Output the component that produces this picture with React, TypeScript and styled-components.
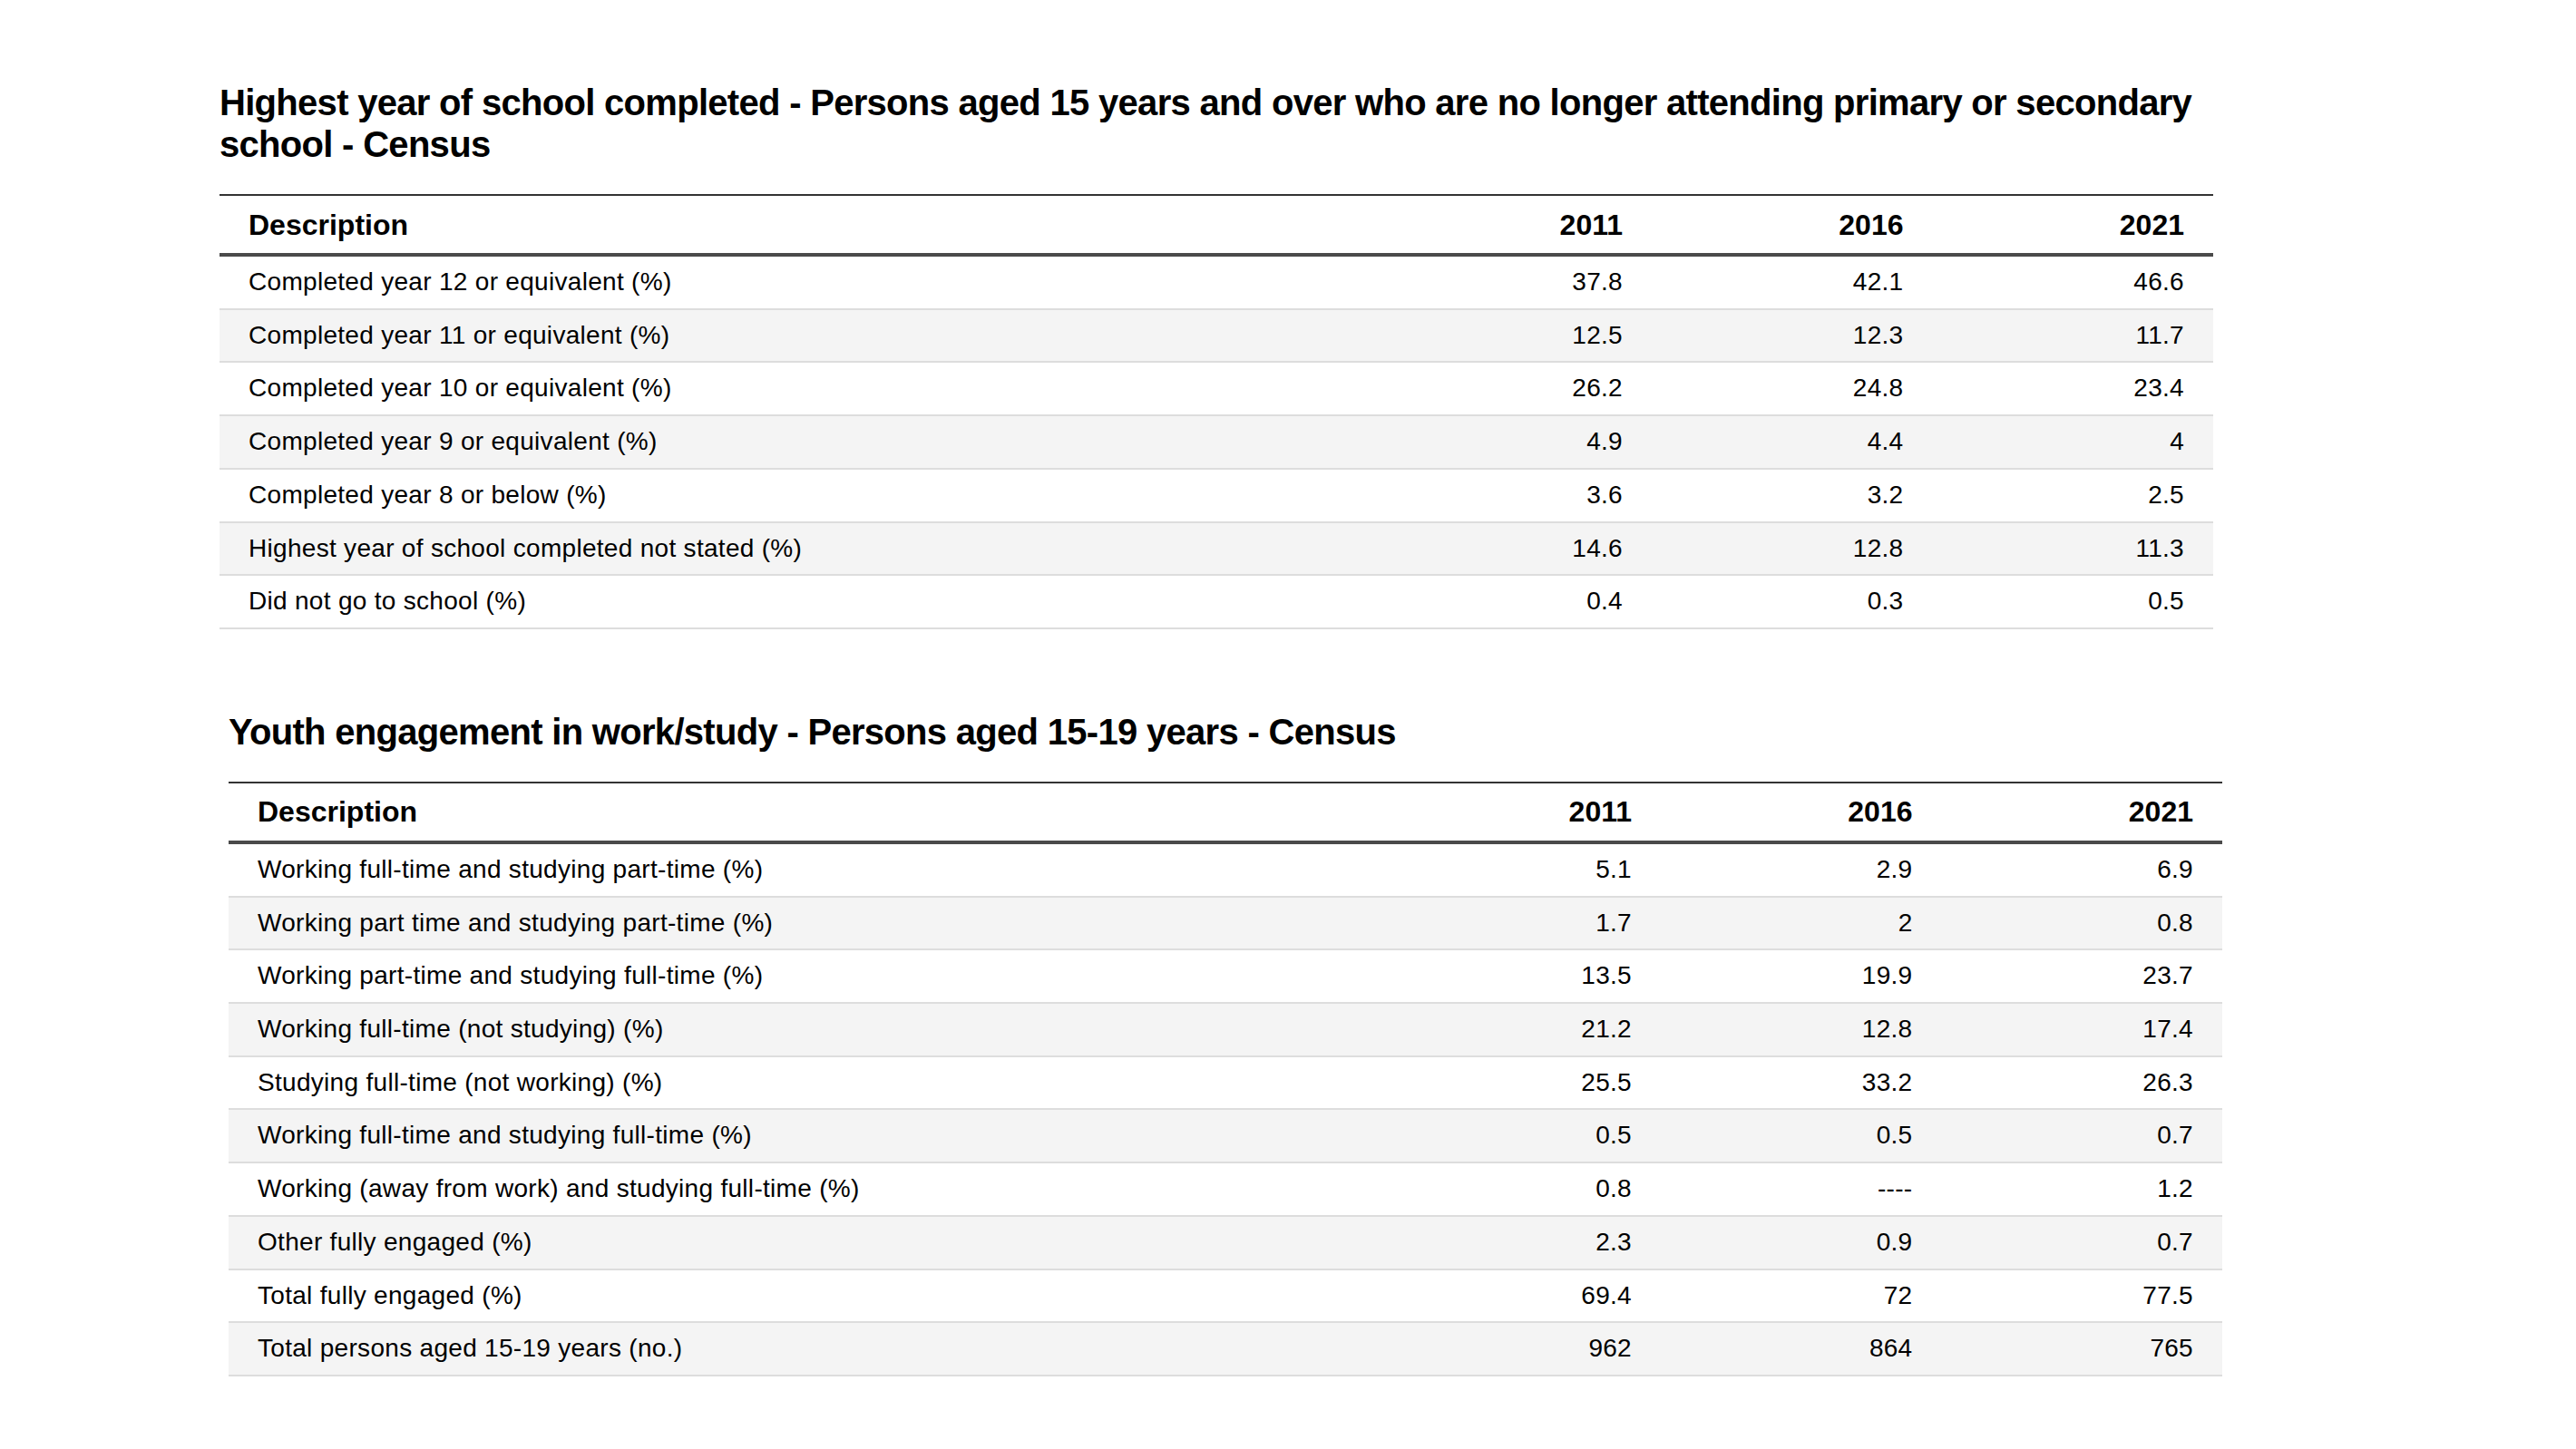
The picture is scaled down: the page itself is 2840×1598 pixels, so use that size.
import React from "react";
import styled, { createGlobalStyle } from "styled-components";

const GlobalStyle = createGlobalStyle`
  html, body {
    margin: 0;
    padding: 0;
    background: #ffffff;
  }
  body {
    font-family: "Liberation Sans", Arial, Helvetica, sans-serif;
    color: #000000;
  }
`;

const Page = styled.main`
  display: flex;
  flex-direction: column;
  padding: 90px 0 80px 242px;
`;

const Section = styled.section<{ $offset?: number; $gapTop?: number }>`
  width: 2198px;
  margin-left: ${(p) => p.$offset ?? 0}px;
  margin-top: ${(p) => p.$gapTop ?? 0}px;
  display: flex;
  flex-direction: column;
  gap: 32px;
`;

const Title = styled.h2`
  margin: 0;
  font-size: 40px;
  line-height: 46px;
  font-weight: 700;
  letter-spacing: -0.7px;
  color: #000;
`;

const Table = styled.table`
  width: 100%;
  border-collapse: collapse;
  table-layout: fixed;
  border-top: 2px solid #333333;
`;

const NumCol = styled.col`
  width: 309.5px;
`;

const HeadCell = styled.th<{ $num?: boolean }>`
  font-size: 32px;
  font-weight: 700;
  line-height: 38px;
  padding: 12.5px 32px;
  text-align: ${(p) => (p.$num ? "right" : "left")};
  border-bottom: 4px solid #4a4a4a;
  color: #000;
`;

const Row = styled.tr<{ $striped: boolean }>`
  background: ${(p) => (p.$striped ? "#f4f4f4" : "#ffffff")};
  border-bottom: 2px solid #dddddd;
`;

const Cell = styled.td<{ $num?: boolean }>`
  font-size: 28px;
  line-height: 40.7px;
  letter-spacing: 0.3px;
  padding: 8px 32px 8px 32px;
  text-align: ${(p) => (p.$num ? "right" : "left")};
  color: #000;
  white-space: nowrap;
`;

type RowData = [string, string, string, string];

const schoolRows: RowData[] = [
  ["Completed year 12 or equivalent (%)", "37.8", "42.1", "46.6"],
  ["Completed year 11 or equivalent (%)", "12.5", "12.3", "11.7"],
  ["Completed year 10 or equivalent (%)", "26.2", "24.8", "23.4"],
  ["Completed year 9 or equivalent (%)", "4.9", "4.4", "4"],
  ["Completed year 8 or below (%)", "3.6", "3.2", "2.5"],
  ["Highest year of school completed not stated (%)", "14.6", "12.8", "11.3"],
  ["Did not go to school (%)", "0.4", "0.3", "0.5"],
];

const youthRows: RowData[] = [
  ["Working full-time and studying part-time (%)", "5.1", "2.9", "6.9"],
  ["Working part time and studying part-time (%)", "1.7", "2", "0.8"],
  ["Working part-time and studying full-time (%)", "13.5", "19.9", "23.7"],
  ["Working full-time (not studying) (%)", "21.2", "12.8", "17.4"],
  ["Studying full-time (not working) (%)", "25.5", "33.2", "26.3"],
  ["Working full-time and studying full-time (%)", "0.5", "0.5", "0.7"],
  ["Working (away from work) and studying full-time (%)", "0.8", "----", "1.2"],
  ["Other fully engaged (%)", "2.3", "0.9", "0.7"],
  ["Total fully engaged (%)", "69.4", "72", "77.5"],
  ["Total persons aged 15-19 years (no.)", "962", "864", "765"],
];

const DataTable: React.FC<{ rows: RowData[] }> = ({ rows }) => (
  <Table>
    <colgroup>
      <col />
      <NumCol />
      <NumCol />
      <NumCol />
    </colgroup>
    <thead>
      <tr>
        <HeadCell>Description</HeadCell>
        <HeadCell $num>2011</HeadCell>
        <HeadCell $num>2016</HeadCell>
        <HeadCell $num>2021</HeadCell>
      </tr>
    </thead>
    <tbody>
      {rows.map((r, i) => (
        <Row key={r[0]} $striped={i % 2 === 1}>
          <Cell>{r[0]}</Cell>
          <Cell $num>{r[1]}</Cell>
          <Cell $num>{r[2]}</Cell>
          <Cell $num>{r[3]}</Cell>
        </Row>
      ))}
    </tbody>
  </Table>
);

export default function App() {
  return (
    <>
      <GlobalStyle />
      <Page>
        <Section>
          <Title>
            Highest year of school completed - Persons aged 15 years and over who are no longer
            attending primary or secondary school - Census
          </Title>
          <DataTable rows={schoolRows} />
        </Section>
        <Section $offset={10} $gapTop={90}>
          <Title>Youth engagement in work/study - Persons aged 15-19 years - Census</Title>
          <DataTable rows={youthRows} />
        </Section>
      </Page>
    </>
  );
}
